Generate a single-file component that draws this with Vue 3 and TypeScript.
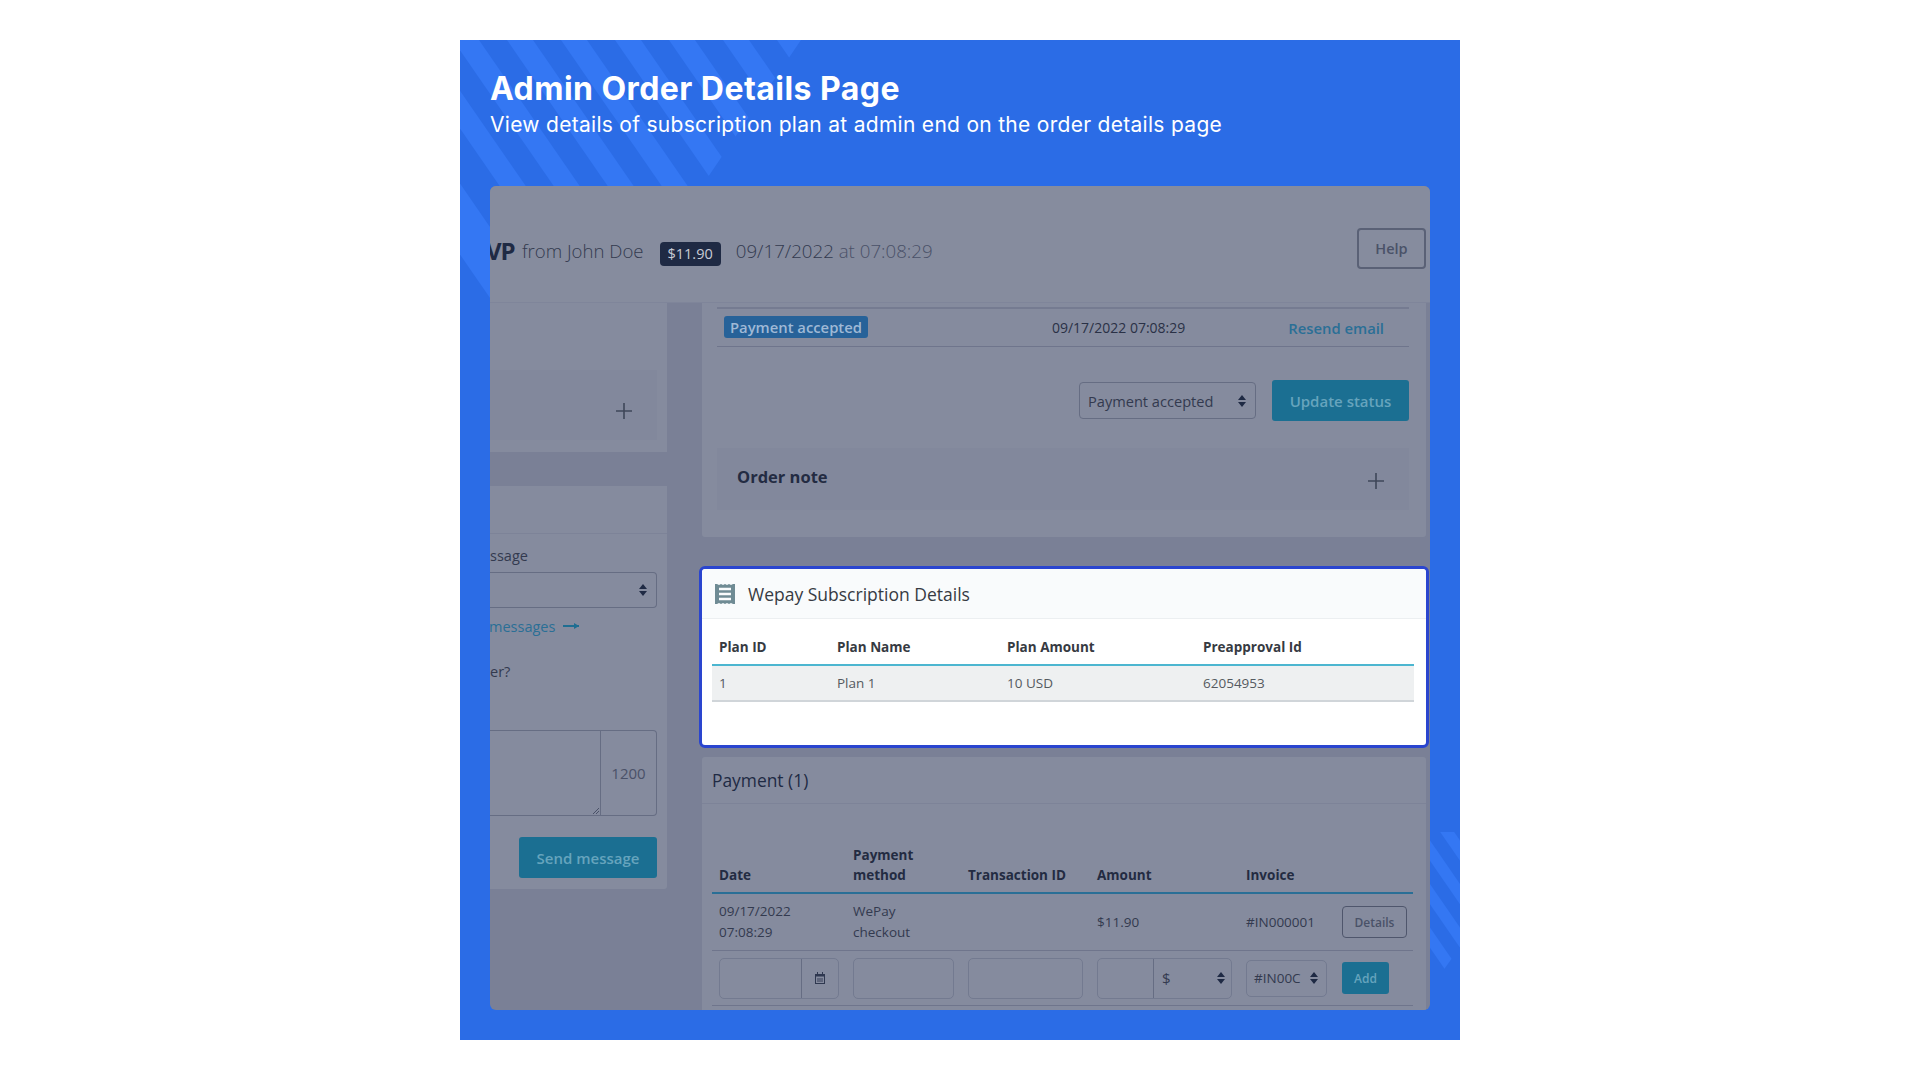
<template>
  <div class="page">
    <section class="promo">
      <svg class="stripes" width="1000" height="1000" viewBox="0 0 1000 1000" aria-hidden="true">
        <defs>
          <clipPath id="top-cut"><polygon points="0,0 341,0 248,137 0,501" /></clipPath>
          <clipPath id="bottom-cut"><polygon points="960,792 1000,792 1000,907 970,949 960,962" /></clipPath>
        </defs>
        <g clip-path="url(#top-cut)" fill="#3477f3">
          <polygon v-for="p in topStripes" :key="p" :points="p" />
        </g>
        <g clip-path="url(#bottom-cut)" fill="#3477f3">
          <polygon v-for="p in bottomStripes" :key="p" :points="p" />
        </g>
      </svg>

      <header class="promo-head">
        <h1>Admin Order Details Page</h1>
        <p>View details of subscription plan at admin end on the order details page</p>
      </header>

      <div class="shot">
        <div class="order-bar">
          <b class="ref">VP</b>
          <span class="from">from John Doe</span>
          <span class="total">$11.90</span>
          <span class="when">09/17/2022 <i>at 07:08:29</i></span>
          <button class="help">Help</button>
        </div>

        <div class="columns">
          <aside class="left">
            <div class="card card-docs">
              <div class="collapsed">
                <svg class="plus" width="16" height="16" viewBox="0 0 16 16"><path d="M8 0v16M0 8h16" /></svg>
              </div>
            </div>
            <div class="card card-msg">
              <div class="card-head-empty"></div>
              <div class="msg-body">
                <div class="lbl">ssage</div>
                <div class="fake-select">
                  <svg width="8" height="12" viewBox="0 0 8 12"><path d="M4 0l4 5H0zM4 12L0 7h8z" /></svg>
                </div>
                <div class="msg-link">messages <span class="arrow"></span></div>
                <div class="lbl lbl-q">er?</div>
                <div class="textarea">
                  <div class="area">
                    <svg class="grip" width="6" height="6" viewBox="0 0 6 6"><path d="M0 6l6-6M3 6l3-3" /></svg>
                  </div>
                  <div class="count">1200</div>
                </div>
                <div class="send-row"><button class="btn-teal">Send message</button></div>
              </div>
            </div>
          </aside>

          <main class="right">
            <div class="card card-status">
              <div class="history">
                <span class="badge">Payment accepted</span>
                <span class="stamp">09/17/2022 07:08:29</span>
                <a class="resend">Resend email</a>
              </div>
              <div class="status-form">
                <div class="fake-select status-select">
                  <span>Payment accepted</span>
                  <svg width="8" height="12" viewBox="0 0 8 12"><path d="M4 0l4 5H0zM4 12L0 7h8z" /></svg>
                </div>
                <button class="btn-teal">Update status</button>
              </div>
              <div class="note">
                <strong>Order note</strong>
                <svg class="plus" width="16" height="16" viewBox="0 0 16 16"><path d="M8 0v16M0 8h16" /></svg>
              </div>
            </div>

            <div class="highlight">
              <div class="hl-head">
                <svg width="20" height="20" viewBox="0 0 20 20">
                  <path d="M0 0h2l2 1 2-1 2 1 2-1 2 1 2-1 2 1 2-1h2v20h-2l-2-1-2 1-2-1-2 1-2-1-2 1-2-1-2 1H0z" fill="#6f8b94" />
                  <path d="M4 5h12M4 10h12M4 15h12" stroke="#f9fbfc" stroke-width="2.4" />
                </svg>
                <span>Wepay Subscription Details</span>
              </div>
              <table class="hl-table">
                <colgroup><col style="width: 118px" /><col style="width: 170px" /><col style="width: 196px" /><col /></colgroup>
                <thead>
                  <tr><th>Plan ID</th><th>Plan Name</th><th>Plan Amount</th><th>Preapproval Id</th></tr>
                </thead>
                <tbody>
                  <tr><td>1</td><td>Plan 1</td><td>10 USD</td><td>62054953</td></tr>
                </tbody>
              </table>
            </div>

            <div class="card card-pay">
              <div class="pay-head">Payment (1)</div>
              <table class="pay-table">
                <colgroup>
                  <col style="width: 134px" /><col style="width: 115px" /><col style="width: 129px" />
                  <col style="width: 149px" /><col style="width: 96px" /><col />
                </colgroup>
                <thead>
                  <tr>
                    <th>Date</th><th>Payment<br />method</th><th>Transaction ID</th><th>Amount</th><th>Invoice</th><th></th>
                  </tr>
                </thead>
                <tbody>
                  <tr class="pay-row">
                    <td>09/17/2022<br />07:08:29</td>
                    <td>WePay<br />checkout</td>
                    <td></td>
                    <td>$11.90</td>
                    <td>#IN000001</td>
                    <td><button class="details">Details</button></td>
                  </tr>
                  <tr class="add-row">
                    <td>
                      <div class="group date-group">
                        <div class="cell grow"></div>
                        <div class="cell addon">
                          <svg width="10" height="12" viewBox="0 0 10 12"><path d="M0 2h2V0h1v2h4V0h1v2h2v10H0zM1 4.5V11h8V4.5z" fill="#2f3850" /><path d="M2 6h6v4H2z" fill="#2f3850" opacity=".45" /></svg>
                        </div>
                      </div>
                    </td>
                    <td><div class="group plain"></div></td>
                    <td><div class="group plain"></div></td>
                    <td>
                      <div class="group amount-group">
                        <div class="cell amount"></div>
                        <div class="cell currency">
                          <span>$</span>
                          <svg width="8" height="12" viewBox="0 0 8 12"><path d="M4 0l4 5H0zM4 12L0 7h8z" /></svg>
                        </div>
                      </div>
                    </td>
                    <td>
                      <div class="fake-select invoice">
                        <span>#IN00C</span>
                        <svg width="8" height="12" viewBox="0 0 8 12"><path d="M4 0l4 5H0zM4 12L0 7h8z" /></svg>
                      </div>
                    </td>
                    <td><button class="add">Add</button></td>
                  </tr>
                </tbody>
              </table>
            </div>
          </main>
        </div>
      </div>
    </section>
  </div>
</template>

<script setup lang="ts">
// the stripes all share one slant, only the start x differs
const slant = 1.45

function band(x0: number, width: number, maxY: number): string {
  const dx = maxY / slant
  return `${x0},0 ${x0 + width},0 ${x0 + width + dx},${maxY} ${x0 + dx},${maxY}`
}

// the last band on the left is wider than the others
const topStripes: string[] = [band(-148, 49, 320)]
for (let k = -2; k <= 5; k++) topStripes.push(band(47 + 54 * k, 26, 320))

const bottomStripes: string[] = []
for (let k = -3; k <= 2; k++) bottomStripes.push(band(434 + 30 * k, 14, 1000))
</script>

<style scoped>
.page {
  width: 1920px;
  height: 1080px;
  padding-top: 40px;
  box-sizing: border-box;
  background: #fff;
  font-family: 'Open Sans', 'Liberation Sans', sans-serif;
}

.promo {
  position: relative;
  width: 1000px;
  height: 1000px;
  margin-left: 460px;
  padding: 26px 30px 0;
  box-sizing: border-box;
  background: #2b6ce6;
  overflow: hidden;
}

.stripes {
  position: absolute;
  left: 0;
  top: 0;
}

.promo-head {
  position: relative;
  height: 120px;
  color: #fff;
}

.promo-head h1 {
  margin: 0;
  font: 700 32px/46px Inter, 'Liberation Sans', sans-serif;
  letter-spacing: 0.45px;
}

.promo-head p {
  margin: -1px 0 0;
  font: 400 21px/28px Inter, 'Liberation Sans', sans-serif;
  letter-spacing: 0.29px;
}

.shot {
  position: relative;
  width: 940px;
  height: 824px;
  background: #7a8096;
  border-radius: 6px;
  overflow: hidden;
  color: #333a4f;
}

/* order bar */
.order-bar {
  display: flex;
  align-items: center;
  height: 108px;
  padding: 8px 4px 0 0;
  background: #868c9e;
  border-bottom: 1px solid #7f859a;
}

.ref {
  width: 25px;
  margin-left: -4px;
  padding-top: 5px;
  font-size: 24px;
  color: #1f2a44;
  letter-spacing: -1px;
}

.from {
  margin-left: 11px;
  padding-top: 4px;
  font-size: 18.6px;
  font-weight: 300;
  color: #333a4f;
}

.total {
  margin-left: 16px;
  margin-top: 11px;
  padding: 0 8px;
  height: 24px;
  line-height: 24px;
  font-size: 14.5px;
  color: #c9ccd6;
  background: #1f2a44;
  border-radius: 4px;
}

.when {
  margin-left: 15px;
  padding-top: 4px;
  font-size: 18.7px;
  font-weight: 300;
  color: #333a4f;
}

.when i {
  font-style: normal;
  color: #4a5168;
}

.help {
  width: 69px;
  height: 41px;
  margin-left: auto;
  margin-top: 1px;
  padding: 0;
  font: 600 14.5px 'Open Sans', sans-serif;
  color: #4a5268;
  background: transparent;
  border: 2px solid #5a6176;
  border-radius: 4px;
}

.columns {
  display: flex;
  gap: 35px;
}

.card {
  background: #858b9e;
}

/* left column */
.left {
  width: 177px;
  flex: none;
}

.card-docs {
  height: 149px;
  padding-top: 67px;
  box-sizing: border-box;
}

.collapsed {
  display: flex;
  align-items: center;
  justify-content: flex-end;
  width: 167px;
  height: 70px;
  padding: 12px 25px 0 0;
  box-sizing: border-box;
  background: #82889c;
}

.plus path {
  stroke: #3f4759;
  stroke-width: 1.6;
  fill: none;
}

.card-msg {
  height: 403px;
  margin-top: 34px;
  border-radius: 0 0 3px 0;
}

.card-head-empty {
  height: 47px;
  border-bottom: 1px solid #7d8398;
}

.msg-body {
  padding-right: 10px;
}

.lbl {
  padding-top: 12px;
  font-size: 14.5px;
  line-height: 20px;
  color: #333a4f;
}

.fake-select {
  display: flex;
  align-items: center;
  justify-content: flex-end;
  box-sizing: border-box;
  border: 1px solid #666d83;
  border-radius: 4px;
}

.fake-select svg,
.currency svg {
  flex: none;
  fill: #1f2a44;
}

.left .fake-select {
  height: 36px;
  margin-top: 6px;
  padding-right: 9px;
  border-left: 0;
  border-radius: 0 4px 4px 0;
}

.msg-link {
  display: flex;
  align-items: center;
  gap: 8px;
  height: 20px;
  margin: 8px 0 0 -1px;
  font-size: 14.5px;
  color: #2a6f96;
}

.arrow {
  position: relative;
  width: 16px;
  height: 2px;
  background: #1f6e92;
}

.arrow::after {
  content: '';
  position: absolute;
  right: 0;
  top: -2px;
  border-left: 5px solid #1f6e92;
  border-top: 3px solid transparent;
  border-bottom: 3px solid transparent;
}

.lbl-q {
  padding-top: 26px;
}

.textarea {
  display: flex;
  height: 86px;
  margin-top: 48px;
  box-sizing: border-box;
  border: 1px solid #666d83;
  border-left: 0;
  border-radius: 0 4px 4px 0;
}

.area {
  position: relative;
  width: 110px;
  border-right: 1px solid #666d83;
}

.grip {
  position: absolute;
  right: 1px;
  bottom: 1px;
}

.grip path {
  stroke: #4a5168;
  fill: none;
}

.count {
  flex: 1;
  align-self: center;
  text-align: center;
  font-size: 15px;
  color: #4a5168;
}

.send-row {
  display: flex;
  justify-content: flex-end;
  margin-top: 21px;
}

.btn-teal {
  height: 41px;
  padding: 0;
  font: 600 15px 'Open Sans', sans-serif;
  color: #66a4bd;
  background: #1b6f92;
  border: 0;
  border-radius: 3px;
}

.send-row .btn-teal {
  width: 138px;
}

/* right column */
.right {
  width: 724px;
  flex: none;
}

.card-status {
  height: 234px;
  padding: 4px 17px 0 15px;
  box-sizing: border-box;
  border-radius: 0 0 3px 3px;
}

.history {
  position: relative;
  display: flex;
  align-items: center;
  height: 40px;
  box-sizing: border-box;
  padding: 0 25px 0 7px;
  border-top: 2px solid #757b91;
  border-bottom: 1px solid #6f758c;
  font-size: 14px;
}

.badge {
  margin-top: -1px;
  padding: 0 6px;
  height: 22px;
  line-height: 22px;
  font-size: 14.8px;
  font-weight: 600;
  color: #9fb9d6;
  background: #276299;
  border-radius: 3px;
}

.stamp {
  margin-left: 184px;
  margin-top: -1px;
  color: #2a3146;
}

.resend {
  margin-left: auto;
  margin-top: 1px;
  font-size: 14.8px;
  font-weight: 600;
  color: #2a6f96;
}

.status-form {
  display: flex;
  justify-content: flex-end;
  align-items: center;
  gap: 16px;
  margin-top: 33px;
}

.status-select {
  width: 177px;
  height: 37px;
  padding: 0 9px 0 8px;
  font-size: 14.6px;
  color: #333a4f;
}

.status-select span {
  margin-right: auto;
}

.status-form .btn-teal {
  width: 137px;
}

.note {
  display: flex;
  align-items: center;
  justify-content: space-between;
  height: 62px;
  margin-top: 27px;
  padding: 0 25px 0 20px;
  background: #82889c;
}

.note strong {
  margin-top: -6px;
  font-size: 16.5px;
  font-weight: 700;
  color: #232b42;
}

.note .plus {
  margin-top: 4px;
}

.highlight {
  height: 182px;
  margin: 29px -3px 0 -3px;
  box-sizing: border-box;
  background: #fff;
  border: 3px solid #2a45cf;
  border-radius: 6px;
  position: relative;
}

.hl-head {
  display: flex;
  align-items: center;
  gap: 13px;
  height: 50px;
  padding-left: 13px;
  box-sizing: border-box;
  background: #f9fbfc;
  border-bottom: 1px solid #eceff1;
  border-radius: 4px 4px 0 0;
  font-size: 17.5px;
  color: #363a42;
}

.hl-table,
.pay-table {
  border-collapse: collapse;
  table-layout: fixed;
}

.hl-table {
  width: 702px;
  margin: 10px 0 0 10px;
  font-size: 13.5px;
  color: #555a60;
}

.hl-table th {
  height: 35px;
  padding: 0 7px;
  text-align: left;
  font-weight: 700;
  color: #363a42;
  border-bottom: 2px solid #4cb6d0;
}

.hl-table td {
  height: 34px;
  padding: 0 7px;
  background: #eef0f1;
  border-bottom: 2px solid #d0d5d9;
}

.card-pay {
  height: 300px;
  margin-top: 9px;
  border-radius: 3px 3px 0 0;
}

.pay-head {
  height: 47px;
  padding-left: 10px;
  box-sizing: border-box;
  line-height: 47px;
  font-size: 17.4px;
  font-weight: 500;
  color: #1f2a44;
  border-bottom: 1px solid #7d8398;
}

.pay-table {
  width: 701px;
  margin: 37px 0 0 10px;
  font-size: 13.5px;
  color: #333a4f;
}

.pay-table th {
  height: 52px;
  padding: 0 7px 7px;
  box-sizing: border-box;
  vertical-align: bottom;
  text-align: left;
  line-height: 20px;
  font-weight: 700;
  color: #232b42;
  border-bottom: 2px solid #2a6f96;
}

.pay-table td {
  padding: 0 7px;
  line-height: 21px;
}

.pay-row td {
  height: 56px;
  border-bottom: 1px solid #6f758c;
}

.add-row td {
  height: 54px;
  border-bottom: 1px solid #6f758c;
}

.details {
  display: block;
  width: 65px;
  height: 32px;
  padding: 0;
  font: 600 12px 'Open Sans', sans-serif;
  color: #4a5268;
  background: transparent;
  border: 1px solid #4f566c;
  border-radius: 4px;
}

.group {
  display: flex;
  height: 41px;
  box-sizing: border-box;
  border: 1px solid #737a90;
  border-radius: 5px;
}

.plain {
  width: 100%;
}

.date-group {
  width: 120px;
}

.amount-group {
  width: 135px;
}

.cell.grow {
  flex: 1;
}

.cell.addon {
  display: flex;
  align-items: center;
  justify-content: center;
  width: 36px;
  border-left: 1px solid #666d83;
}

.cell.amount {
  width: 55px;
}

.currency {
  flex: 1;
  display: flex;
  align-items: center;
  justify-content: space-between;
  padding: 0 6px 0 8px;
  font-size: 15px;
  border-left: 1px solid #666d83;
}

.invoice {
  justify-content: space-between;
  width: 81px;
  height: 37px;
  padding: 0 8px 0 7px;
  border-color: #737a90;
  border-radius: 5px;
}

.add {
  display: block;
  width: 47px;
  height: 32px;
  padding: 0;
  font: 600 12px 'Open Sans', sans-serif;
  color: #66a4bd;
  background: #1b6f92;
  border: 0;
  border-radius: 3px;
}
</style>
